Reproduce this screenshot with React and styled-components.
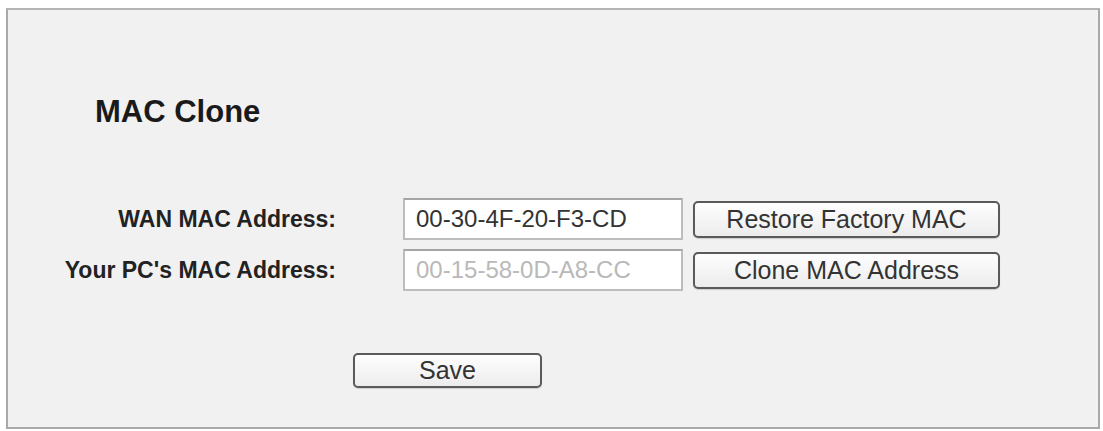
import React from 'react'
import styled, { createGlobalStyle } from 'styled-components'

const GlobalStyle = createGlobalStyle`
  html, body {
    margin: 0;
    padding: 0;
    background: #ffffff;
  }
  body {
    font-family: "Liberation Sans", Arial, sans-serif;
  }
`

const Panel = styled.div`
  box-sizing: border-box;
  width: 1094px;
  height: 421px;
  margin: 8px 0 0 6px;
  padding: 1px 0 0 0;
  background: #f1f1f1;
  border: 2px solid #a9a9a9;
  border-top-color: #b4b4b4;
`

const Title = styled.h2`
  margin: 84px 0 0 87px;
  font-size: 31px;
  line-height: 34px;
  font-weight: bold;
  color: #1a1a1a;
`

const Form = styled.div`
  display: grid;
  grid-template-columns: 328px 280px 307px;
  row-gap: 9px;
  margin-top: 69px;
  align-items: center;
`

const Label = styled.label`
  text-align: right;
  font-size: 23px;
  font-weight: bold;
  color: #222222;
  white-space: nowrap;
`

const Field = styled.input`
  box-sizing: border-box;
  width: 280px;
  height: 42px;
  margin-left: 67px;
  padding: 0 0 0 11px;
  font-family: "Liberation Sans", Arial, sans-serif;
  font-size: 24px;
  color: ${p => (p.$muted ? '#b9b9b9' : '#333333')};
  background: #ffffff;
  border: 2px solid #bdbdbd;
  border-top-color: #a5a5a5;
  outline: none;
`

const Button = styled.button`
  box-sizing: border-box;
  width: ${p => p.$width}px;
  height: ${p => p.$height}px;
  padding: 0;
  font-family: "Liberation Sans", Arial, sans-serif;
  font-size: 25px;
  color: #333333;
  background: linear-gradient(#fefefe, #ececec);
  border: 2px solid #5a5a5a;
  border-radius: 5px;
  box-shadow: 0 1px 1px rgba(0, 0, 0, 0.15);
  cursor: pointer;
`

const ActionButton = styled(Button)`
  margin-left: 77px;
`

const Footer = styled.div`
  margin: 62px 0 0 345px;
`

export default function App() {
  return (
    <>
      <GlobalStyle />
      <Panel>
        <Title>MAC Clone</Title>
        <Form>
          <Label>WAN MAC Address:</Label>
          <Field defaultValue="00-30-4F-20-F3-CD" />
          <ActionButton $width={307} $height={37}>Restore Factory MAC</ActionButton>

          <Label>Your PC's MAC Address:</Label>
          <Field $muted defaultValue="00-15-58-0D-A8-CC" readOnly />
          <ActionButton $width={307} $height={37}>Clone MAC Address</ActionButton>
        </Form>
        <Footer>
          <Button $width={189} $height={35}>Save</Button>
        </Footer>
      </Panel>
    </>
  )
}
